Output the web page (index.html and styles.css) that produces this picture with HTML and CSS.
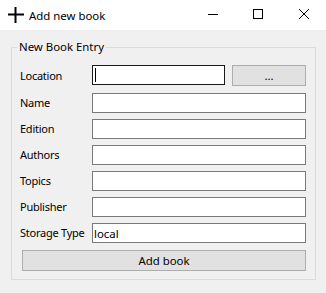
FILE: index.html
```html
<!DOCTYPE html>
<html lang="en">
<head>
  <meta charset="UTF-8">
  <title>Add new book</title>
  <link rel="stylesheet" href="styles.css">
</head>
<body>
  <div class="window">
    <div class="titlebar">
      <svg class="app-icon" width="16" height="16" viewBox="0 0 16 16">
        <path d="M0 7.5h16M7.5 0v16" stroke="#000" stroke-width="2"/>
      </svg>
      <span class="title">Add new book</span>
      <div class="controls">
        <svg width="46" height="30" viewBox="0 0 46 30"><path d="M20 14.5h10" stroke="#000"/></svg>
        <svg width="46" height="30" viewBox="0 0 46 30"><rect x="19.5" y="9.5" width="9" height="9" fill="none" stroke="#000"/></svg>
        <svg width="46" height="30" viewBox="0 0 46 30"><path d="M19 9l10 10M29 9l-10 10" stroke="#000"/></svg>
      </div>
    </div>

    <div class="content">
      <fieldset class="group">
        <legend>New Book Entry</legend>

        <div class="form">
          <label>Location</label>
          <div class="location-row">
            <div class="field">
              <input type="text" class="focused">
              <span class="caret"></span>
            </div>
            <button class="browse">...</button>
          </div>

          <label>Name</label>
          <input type="text">

          <label>Edition</label>
          <input type="text">

          <label>Authors</label>
          <input type="text">

          <label>Topics</label>
          <input type="text">

          <label>Publisher</label>
          <input type="text">

          <label>Storage Type</label>
          <input type="text" value="local">
        </div>

        <button class="add">Add book</button>
      </fieldset>
    </div>
  </div>
</body>
</html>
```

FILE: styles.css
```css
body {
  margin: 0;
  font-family: "Noto Sans", "Open Sans", sans-serif;
  font-size: 11.4px;
  color: #000;
  background: #f0f0f0;
}
.window {
  width: 326px;
  height: 293px;
  background: #f0f0f0;
}
.titlebar {
  height: 30px;
  background: #fff;
  display: flex;
  align-items: center;
}
.app-icon {
  margin-left: 8px;
  margin-right: 5px;
}
.title {
  flex: 1;
}
.controls {
  display: flex;
}
.controls svg {
  display: block;
}
.content {
  padding: 10px 10px 0 11px;
}
.group {
  margin: 0;
  width: 305px;
  box-sizing: border-box;
  border: 1px solid #dcdcdc;
  padding: 11px 9px 8px 8px;
}
legend {
  padding: 0 2px;
  margin-left: -3px;
  line-height: 14px;
}
.form {
  display: grid;
  grid-template-columns: 72px 1fr;
  row-gap: 6px;
  align-items: center;
}
.form label {
  line-height: 20px;
  white-space: nowrap;
  font-size: 11px;
  letter-spacing: -0.25px;
}
input {
  height: 20px;
  box-sizing: border-box;
  border: 1px solid #7a7a7a;
  background: #fff;
  padding: 0 1px;
  font: inherit;
  outline: none;
  margin: 0;
}
input.focused {
  border-color: #1a1a1a;
  width: 100%;
  display: block;
}
.field {
  position: relative;
}
.caret {
  position: absolute;
  left: 3px;
  top: 3px;
  width: 1px;
  height: 14px;
  background: #000;
}
.location-row {
  display: grid;
  grid-template-columns: 133px 1fr;
  column-gap: 7px;
  margin-bottom: 1px;
}
button {
  font: inherit;
  background: #e1e1e1;
  border: 1px solid #adadad;
  border-radius: 0;
  margin: 0;
  padding: 0;
}
.browse {
  height: 21px;
}
.add {
  display: block;
  width: 284px;
  height: 21px;
  margin: 7px 0 0 2px;
}
```
